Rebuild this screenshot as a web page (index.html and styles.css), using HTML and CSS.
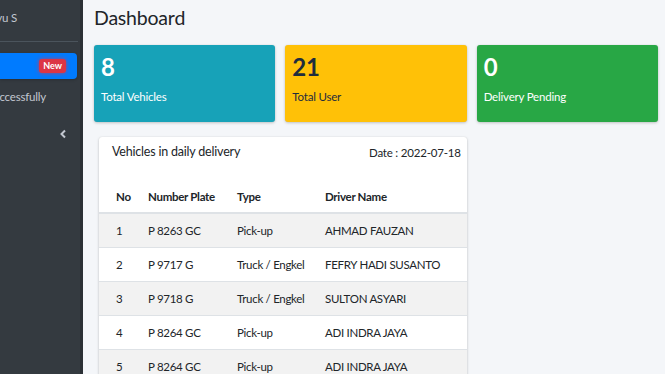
FILE: index.html
```html
<!DOCTYPE html>
<html lang="en">
<head>
    <meta charset="UTF-8">
    <meta name="viewport" content="width=device-width, initial-scale=1.0">
    <title>Dashboard</title>
    <link rel="stylesheet" href="styles.css">
</head>
<body>
    <!-- Sidebar (half collapsed) -->
    <aside class="sidebar">
        <div class="user-panel">
            <span>Bayu S</span>
        </div>
        <nav class="nav">
            <div class="nav-item active">
                <span class="nav-text">Dashboard</span>
                <span class="badge">New</span>
            </div>
            <div class="nav-item">
                <span>Delivery Successfully</span>
            </div>
        </nav>
        <div class="toggle">
            <svg width="8" height="10" viewBox="0 0 8 10">
                <path d="M6 1.5 L2.5 5 L6 8.5" fill="none" stroke="#c2c7d0" stroke-width="2"/>
            </svg>
        </div>
    </aside>

    <main class="content">
        <h1>Dashboard</h1>

        <div class="boxes">
            <div class="small-box bg-info">
                <h3>8</h3>
                <p>Total Vehicles</p>
            </div>
            <div class="small-box bg-warning">
                <h3>21</h3>
                <p>Total User</p>
            </div>
            <div class="small-box bg-success">
                <h3>0</h3>
                <p>Delivery Pending</p>
            </div>
        </div>

        <div class="lower">
            <div class="card">
                <div class="card-header">
                    <span class="card-title">Vehicles in daily delivery</span>
                    <span class="card-date">Date : 2022-07-18</span>
                </div>
                <table class="table">
                    <colgroup>
                        <col class="col-no">
                        <col class="col-plate">
                        <col class="col-type">
                        <col>
                    </colgroup>
                    <thead>
                        <tr>
                            <th>No</th>
                            <th>Number Plate</th>
                            <th>Type</th>
                            <th>Driver Name</th>
                        </tr>
                    </thead>
                    <tbody>
                        <tr>
                            <td>1</td>
                            <td>P 8263 GC</td>
                            <td>Pick-up</td>
                            <td>AHMAD FAUZAN</td>
                        </tr>
                        <tr>
                            <td>2</td>
                            <td>P 9717 G</td>
                            <td>Truck / Engkel</td>
                            <td>FEFRY HADI SUSANTO</td>
                        </tr>
                        <tr>
                            <td>3</td>
                            <td>P 9718 G</td>
                            <td>Truck / Engkel</td>
                            <td>SULTON ASYARI</td>
                        </tr>
                        <tr>
                            <td>4</td>
                            <td>P 8264 GC</td>
                            <td>Pick-up</td>
                            <td>ADI INDRA JAYA</td>
                        </tr>
                        <tr>
                            <td>5</td>
                            <td>P 8264 GC</td>
                            <td>Pick-up</td>
                            <td>ADI INDRA JAYA</td>
                        </tr>
                    </tbody>
                </table>
            </div>
        </div>
    </main>
</body>
</html>
```

FILE: styles.css
```css
body {
    font-family: Lato, "Open Sans", sans-serif;
    margin: 0;
    padding: 0;
    display: flex;
    height: 100vh;
    overflow: hidden;
    background-color: #f4f6f9; /* AdminLTE light gray */
    color: #212529;
    letter-spacing: -0.2px;
}

/* Sidebar */
.sidebar {
    width: 80px;
    flex-shrink: 0;
    background: #343a40;
    border-right: 3px solid #2b3035;
    overflow: hidden;
    color: #c2c7d0;
    font-size: 11.5px;
}
.user-panel {
    display: flex;
    justify-content: flex-end;
    white-space: nowrap;
    padding: 11px 61px 15px 0;
    border-bottom: 1px solid #4b545c;
    margin-right: 2px;
    height: 15px;
}
.nav {
    padding-top: 11px;
}
.nav-item {
    display: flex;
    align-items: center;
    justify-content: flex-end;
    white-space: nowrap;
    height: 26px;
    padding-right: 34px;
    margin-bottom: 4px;
}
.nav-item.active {
    background: #007bff;
    color: #fff;
    border-radius: 0 4px 4px 0;
    padding-right: 11px;
    margin-right: 3px;
    gap: 40px;
    box-shadow: 0 1px 3px rgba(0, 0, 0, 0.2);
}
.badge {
    background: #dc3545;
    color: #fff;
    font-size: 9px;
    font-weight: 700;
    letter-spacing: 0;
    padding: 1px 4px 2px;
    border-radius: 3px;
    box-shadow: 0 0 4px rgba(220, 53, 69, 0.8);
}
.toggle {
    display: flex;
    justify-content: flex-end;
    padding: 16px 13px 0 0;
}

/* Main content */
.content {
    flex: 1;
    padding: 0 7px 0 11px;
}
h1 {
    margin: 5px 0 14px;
    font-size: 19.5px;
    font-weight: 400;
    line-height: 26px;
}
.boxes {
    display: grid;
    grid-template-columns: repeat(3, 1fr);
    gap: 10px;
}
.small-box {
    height: 77px;
    border-radius: 3px;
    box-shadow: 0 0 1px rgba(0, 0, 0, 0.125), 0 1px 3px rgba(0, 0, 0, 0.2);
    padding: 0 7px;
    color: #fff;
}
.small-box h3 {
    margin: 7px 0 0;
    font-size: 24px;
    font-weight: 700;
    line-height: 30px;
}
.small-box p {
    margin: 8px 0 0;
    font-size: 11.5px;
}
.bg-info { background: #17a2b8; }
.bg-warning { background: #ffc107; color: #1f2d3d; }
.bg-success { background: #28a745; }

/* Table card */
.lower {
    display: grid;
    grid-template-columns: repeat(3, 1fr);
    gap: 10px;
    margin-top: 15px;
}
.card {
    grid-column: span 2;
    margin-left: 5px;
    background: #fff;
    border-radius: 3px;
    box-shadow: 0 0 1px rgba(0, 0, 0, 0.125), 0 1px 3px rgba(0, 0, 0, 0.2);
}
.card-header {
    display: flex;
    justify-content: space-between;
    padding: 7px 6px 0 13px;
    height: 36px;
}
.card-title {
    font-size: 12.5px;
}
.card-date {
    font-size: 11.5px;
    padding-top: 2px;
}
.table {
    width: 100%;
    border-collapse: collapse;
    table-layout: fixed;
    font-size: 11.5px;
    letter-spacing: -0.3px;
}
.col-no { width: 49px; }
.col-plate { width: 89px; }
.col-type { width: 88px; }
.table th {
    text-align: left;
    font-weight: 700;
    height: 32px;
    padding: 0;
    border-bottom: 2px solid #dee2e6;
}
.table td {
    height: 33px;
    padding: 0;
    border-top: 1px solid #dee2e6;
}
.table th:first-child,
.table td:first-child {
    padding-left: 17px;
}
.table tbody tr:nth-child(odd) {
    background: #f2f2f2;
}
```
